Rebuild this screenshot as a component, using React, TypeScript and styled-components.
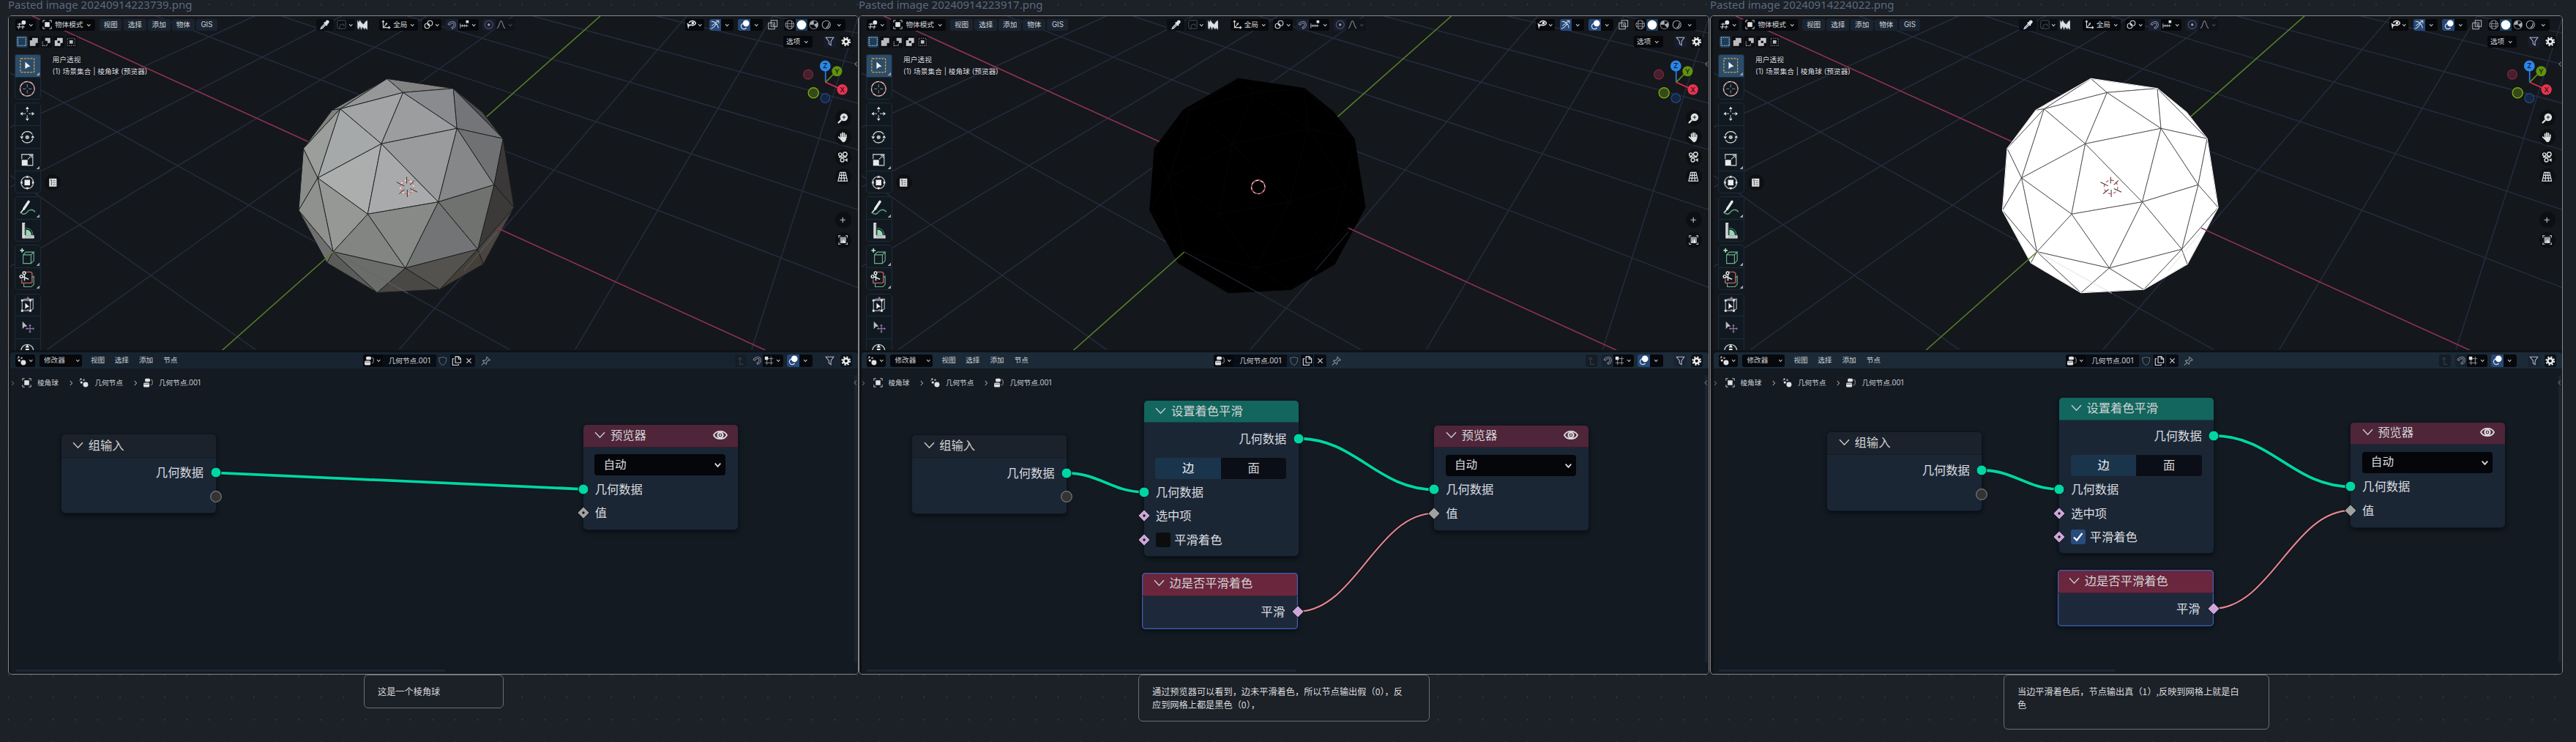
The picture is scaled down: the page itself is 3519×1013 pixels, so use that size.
import React from "react";
import styled, { createGlobalStyle, css } from "styled-components";

const uiFont = `Inter, "Noto Sans CJK SC", sans-serif`;

const GlobalStyle = createGlobalStyle`
  html, body { margin: 0; padding: 0; background: #1c2027; }
  * { box-sizing: border-box; }
  svg { display: block; flex: none; }
`;

/* ---------- page ---------- */

const Page = styled.main`
  width: 3519px;
  height: 1013px;
  overflow: hidden;
  display: flex;
  flex-direction: column;
  padding-left: 11px;
  background-color: #1c2027;
  background-image: radial-gradient(circle at center, #3c3f40 0.7px, rgba(60, 63, 64, 0) 1.3px);
  background-size: 30.53px 30.53px;
  background-position: -3.8px -9.1px;
  font-family: ${uiFont};
`;

const Row = styled.div`
  display: flex;
  align-items: flex-start;
`;

const Slot = styled.div<{ $w: number; $gap?: number }>`
  width: ${(p) => p.$w}px;
  margin-left: ${(p) => p.$gap ?? 0}px;
  flex: none;
`;

const FileLabel = styled.div`
  width: fit-content;
  height: 20px;
  padding-right: 8px;
  background: #1c2027;
  color: #5a6a7d;
  font: 400 15px/13px "Noto Sans", sans-serif;
  white-space: nowrap;
`;

const TitleBar = styled(Row)`
  height: 21px;
`;

const Panel = styled.section`
  height: 900px;
  border: 1px solid #868686;
  border-radius: 5px;
  overflow: hidden;
  background: #0e1216;
`;

const Shot = styled.div<{ $pad: number }>`
  margin-left: ${(p) => p.$pad}px;
  height: 898px;
  display: flex;
  flex-direction: column;
`;

const Note = styled.div<{ $x: number; $w: number; $h: number }>`
  margin-left: ${(p) => p.$x}px;
  width: ${(p) => p.$w}px;
  height: ${(p) => p.$h}px;
  padding: 13px 18px;
  border: 1.5px solid #6e6e6e;
  border-radius: 6px;
  background: #1c2027;
  color: #d9dbdd;
  font: 400 12.2px/18.3px "Noto Sans CJK SC", sans-serif;
  white-space: nowrap;
`;

/* ---------- viewport ---------- */

const Viewport = styled.div`
  position: relative;
  height: 456px;
  flex: none;
  overflow: hidden;
  background: #14171c;
  border-left: 2px solid #101317;
`;

const SceneSvg = styled.svg`
  position: absolute;
  inset: 0 0 0 -2px;
  width: calc(100% + 2px);
  height: 456px;
`;

const Overlay = styled.div`
  position: relative;
  height: 100%;
  margin-left: -2px;
  display: flex;
  flex-direction: column;
`;

const Bar = styled.div<{ $top: number; $right: number }>`
  display: flex;
  align-items: center;
  padding: ${(p) => p.$top}px ${(p) => p.$right}px 0 9px;
  flex: none;
`;

const Ctl = styled.div<{ $w: number; $gap?: number; $bg?: string; $push?: boolean; $h?: number; $dim?: boolean; $r?: string; $left?: boolean }>`
  width: ${(p) => p.$w}px;
  height: ${(p) => p.$h ?? 15.6}px;
  margin-left: ${(p) => (p.$push ? "auto" : `${p.$gap ?? 0}px`)};
  background: ${(p) => p.$bg ?? "#06080c"};
  border-radius: ${(p) => p.$r ?? "3px"};
  display: flex;
  align-items: center;
  justify-content: ${(p) => (p.$left ? "flex-start" : "space-evenly")};
  color: ${(p) => (p.$dim ? "#4b5059" : "#d0d3d6")};
  font-size: 9.65px;
  line-height: 1;
  white-space: nowrap;
  flex: none;
`;

const MenuText = styled.span<{ $gap?: number; $c?: string }>`
  margin-left: ${(p) => p.$gap ?? 0}px;
  color: ${(p) => p.$c ?? "#c8ccd1"};
  font-size: 9.65px;
  line-height: 14px;
  white-space: nowrap;
  flex: none;
`;

const Body = styled.div`
  display: flex;
  flex: 1;
  margin-top: 9.5px;
  padding-left: 8.3px;
  min-height: 0;
`;

const Toolbar = styled.div`
  width: 36px;
  display: flex;
  flex-direction: column;
  gap: 4.4px;
  flex: none;
`;

const ToolGroup = styled.div`
  position: relative;
  border-radius: 4px;
  overflow: hidden;
  background: #111920;
  flex: none;
  &::after {
    content: "";
    position: absolute;
    inset: 0;
    border: 1px solid #1b2b3a;
    border-radius: 4px;
  }
`;

const Tool = styled.div<{ $active?: boolean }>`
  position: relative;
  height: 30.9px;
  display: flex;
  align-items: center;
  justify-content: center;
  padding-right: 1.5px;
  background: ${(p) => (p.$active ? "#2b4d6b" : "transparent")};
  & + & {
    border-top: 1px solid #1b2b3a;
  }
`;

const Corner = styled.i`
  position: absolute;
  right: 2px;
  bottom: 2px;
  width: 4px;
  height: 4px;
  background: linear-gradient(135deg, transparent 50%, #9aa0a6 50%);
`;

const Info = styled.div`
  margin: -0.5px 0 0 15.3px;
  color: #dcdee0;
  font-size: 9.65px;
  letter-spacing: 0.08px;
  line-height: 16px;
  white-space: nowrap;
  text-shadow: 0 1px 1px #000;
`;

const Round = styled.div<{ $gap?: number }>`
  width: 22px;
  height: 22px;
  margin-top: ${(p) => p.$gap ?? 0}px;
  border-radius: 50%;
  background: #0d0f12;
  display: flex;
  align-items: center;
  justify-content: center;
`;

const Float = styled.div`
  margin: 132.5px 0 0 -10.5px;
`;

const NavColumn = styled.div`
  margin-left: auto;
  width: 80px;
  display: flex;
  flex-direction: column;
  align-items: flex-end;
  padding-right: 9.5px;
`;

const GizmoWrap = styled.div`
  margin: 2.5px -9.5px 0 0;
`;

/* ---------- node editor ---------- */

const NodeHeader = styled.div<{ $bg: string }>`
  margin-top: 3px;
  margin-left: 2px;
  height: 22.3px;
  flex: none;
  display: flex;
  align-items: center;
  padding: 0.5px 8px 0 7px;
  border-radius: 4px 4px 0 0;
  background: ${(p) => p.$bg};
`;

const Canvas = styled.div`
  position: relative;
  flex: 1;
  margin-left: 2px;
  background: #131a21;
  overflow: hidden;
`;

const CanvasSpace = styled.div`
  position: absolute;
  inset: 0 0 0 -2px;
`;

const Crumbs = styled.div`
  display: flex;
  align-items: center;
  height: 16px;
  margin-top: 11.7px;
  color: #cdd1d4;
`;

const LinkSvg = styled.svg`
  position: absolute;
  left: 0;
  top: 0;
  overflow: visible;
`;

const NodeBox = styled.div<{ $x: number; $y: number; $h: number; $w?: number; $sel?: boolean }>`
  position: absolute;
  left: ${(p) => p.$x - 12}px;
  top: ${(p) => p.$y - 503}px;
  width: ${(p) => p.$w ?? 211}px;
  height: ${(p) => p.$h}px;
  border-radius: 5px;
  background: ${(p) => (p.$sel ? "#1d293b" : "#1b2635")};
  box-shadow: ${(p) => (p.$sel ? "inset 0 0 0 1.2px #4060b4, 0 2px 6px rgba(4,7,14,.7)" : "0 0 0 1px #0d1420, 0 3px 6px rgba(4,7,14,.8)")};
`;

const NodeTitle = styled.div<{ $bg: string; $h: number; $sel?: boolean }>`
  display: flex;
  align-items: center;
  height: ${(p) => p.$h}px;
  padding: 0 14px 2px 15.5px;
  border-radius: 5px 5px 0 0;
  background: ${(p) => p.$bg};
  color: #d2d4d7;
  font-size: 16.3px;
  line-height: 28px;
  gap: 6.7px;
  border-bottom: 1px solid rgba(8, 12, 20, 0.35);
  ${(p) => p.$sel && css`box-shadow: inset 0 1.2px 0 #4060b4, inset 1.2px 0 0 #4060b4, inset -1.2px 0 0 #4060b4;`}
  & > svg:nth-of-type(2) {
    margin-left: auto;
  }
`;

const Port = styled.div<{ $out?: boolean; $mt?: number; $pad?: number }>`
  position: relative;
  display: flex;
  align-items: center;
  justify-content: ${(p) => (p.$out ? "flex-end" : "flex-start")};
  height: 32.6px;
  margin-top: ${(p) => p.$mt ?? 0}px;
  padding: 0 ${(p) => p.$pad ?? 16.5}px 0 16px;
  color: #dcdee0;
  font-size: 16.3px;
  line-height: 28px;
`;

const PortMark = styled.svg<{ $out?: boolean }>`
  position: absolute;
  top: 7.3px;
  ${(p) => (p.$out ? "right: -9px;" : "left: -9px;")}
`;

const Dropdown = styled.div`
  display: flex;
  align-items: center;
  justify-content: space-between;
  width: 178.4px;
  height: 29px;
  margin: 9.5px 0 2.4px 15.7px;
  padding: 0 3px 0 12px;
  border-radius: 4px;
  background: #04060a;
  color: #dcdee0;
  font-size: 15.6px;
  line-height: 26px;
`;

const Toggle = styled.div`
  display: flex;
  width: 179px;
  height: 29px;
  margin: 9.4px 0 2px 15.7px;
  border-radius: 4px;
  overflow: hidden;
  box-shadow: 0 0 0 0.5px #23262c;
`;

const ToggleItem = styled.div<{ $on?: boolean }>`
  flex: 1;
  text-align: center;
  line-height: 28px;
  font-size: 16.3px;
  color: ${(p) => (p.$on ? "#f2f4f6" : "#d6d8da")};
  background: ${(p) => (p.$on ? "#1a344c" : "#0b0e17")};
`;

const Check = styled.div<{ $on?: boolean }>`
  width: 20px;
  height: 20px;
  margin-right: 5.5px;
  border-radius: 3px;
  background: ${(p) => (p.$on ? "#284c7c" : "#0d0d0d")};
`;

const ScrollX = styled.div<{ $w: number }>`
  position: absolute;
  left: 9px;
  bottom: 3px;
  width: ${(p) => p.$w}px;
  height: 3px;
  border-radius: 2px;
  background: #1d2633;
`;

const ScrollY = styled.div`
  position: absolute;
  right: 1.5px;
  top: 9px;
  width: 3.5px;
  height: 393px;
  border-radius: 2px;
  background: #1b2430;
`;

const Collapse = styled.div`
  position: absolute;
  right: -1px;
  top: 15px;
  color: #9ba0a5;
`;

/* ---------- icons ---------- */

const W = "#dfe1e3";
const glyphs: Record<string, React.ReactNode> = {
  down: <path d="M4 6l4 4.5L12 6" stroke="currentColor" strokeWidth="1.9" />,
  right: <path d="M6 3l4.5 5L6 13" stroke="currentColor" strokeWidth="1.6" />,
  left: <path d="M10 3L5.5 8 10 13" stroke="currentColor" strokeWidth="1.6" />,
  view3d: (
    <g stroke="currentColor" strokeWidth="1.3">
      <path d="M1 7.5h8M0 12h13M5 5L3 15.5M10.5 9.5L9.5 15.5" />
      <circle cx="11.5" cy="4.5" r="3.6" fill={W} stroke="none" />
    </g>
  ),
  object: (
    <g stroke="currentColor" strokeWidth="1.2">
      <path d="M1 4.5V1h3.5M11.5 1H15v3.5M15 11.5V15h-3.5M4.5 15H1v-3.5" />
      <rect x="4" y="4" width="8" height="8" fill={W} stroke="none" />
    </g>
  ),
  dropper: (
    <g>
      <path d="M10 1.5c1.5-1.5 3.5-1 4.300 0 1 1 1.200 2.800-.3 4.200L12 7.500 12.500 8.500 11 10 6 5l1.500-1.500 1 .5z" fill={W} />
      <path d="M8 6.500L2.500 12 1.500 14.500 4 13.500 9.500 8" stroke={W} strokeWidth="1.5" />
    </g>
  ),
  transformBox: (
    <g stroke="#4a5058" strokeWidth="1.2">
      <rect x="1" y="1" width="14" height="14" rx="1.5" />
      <path d="M5 15v-3.5a4 4 0 014-4h3V11" />
    </g>
  ),
  burst: <path d="M0 1l2.500 3L4 .5l3 4.500 3 2 3-4.500L16 1v14.500l-3.500-3-1 2.500-3.500-4-1.500 4.500L4 10l-1.500 4.500L.5 13z" fill={W} stroke="#8d9196" strokeWidth=".6" />,
  axes: (
    <g stroke="currentColor" strokeWidth="1.4">
      <path d="M3 2v11h11M1 4l2-2.500L5 4M12 11l2.500 2-2.500 2M3 13L9 7" />
      <path d="M9 4.500V7H6.500" />
    </g>
  ),
  link: (
    <g stroke="currentColor" strokeWidth="1.4">
      <circle cx="10.300" cy="5.700" r="4.200" />
      <circle cx="5.500" cy="10.300" r="4.200" />
      <circle cx="8" cy="8" r="1.300" fill={W} stroke="none" />
    </g>
  ),
  magnet: (
    <g stroke="#83888f" strokeWidth="1.3">
      <path d="M1.500 6.500C4 1 12 0 14 5s-2 8-5 9.500L7.500 12c3-1.500 5-3.500 4-6S6 4.500 4 8z" />
    </g>
  ),
  ruler: (
    <g stroke="#a9adb2" strokeWidth="1.3">
      <path d="M1 6v8M4.500 8v4M8 8v4M11.500 8v4M1 10h13" />
      <rect x="10.500" y="1" width="4.500" height="4.500" fill={W} stroke="none" />
    </g>
  ),
  proportional: (
    <g>
      <circle cx="8" cy="8" r="6.500" stroke="#555b66" strokeWidth="1.2" />
      <circle cx="8" cy="8" r="2" fill="#9aa0a8" />
    </g>
  ),
  bell: <path d="M1 14c4 0 4-12 7-12s3 12 7 12" stroke="#7b8087" strokeWidth="1.4" />,
  eyeCursor: (
    <g>
      <path d="M4 5c2.500-4.500 9-4 11 .5-2 4-6.500 4.500-9 2" stroke={W} strokeWidth="1.800" />
      <circle cx="10" cy="5.200" r="2.200" fill={W} />
      <path d="M.5 5l7 4.500-3.500 1L2.500 15z" fill={W} />
    </g>
  ),
  gizmo: (
    <g stroke="#c9d3de" strokeWidth="1.4">
      <path d="M1 15c4-1 8-5 9-8M14 2L3 10M10 1.500h4.500V6M2 3c6-1 11 4 12 11" />
    </g>
  ),
  overlay: (
    <g>
      <path d="M7 5.500a4.500 4.500 0 104 7" stroke={W} strokeWidth="1.3" />
      <circle cx="10.500" cy="5.500" r="5" fill="#fff" />
      <path d="M6 8c0 2 2 3 3.500 3" stroke="#244a78" strokeWidth="1" />
    </g>
  ),
  xray: (
    <g stroke="#b5b9be" strokeWidth="1.2">
      <rect x="1" y="5" width="10" height="10" />
      <rect x="5" y="1" width="10" height="10" />
      <path d="M7 8h2v2" />
    </g>
  ),
  wire: (
    <g stroke="#9a9fa5" strokeWidth="1.1">
      <circle cx="8" cy="8" r="7" />
      <path d="M1 6.500h14M1.500 10.500h13M5.500 1.500c-1.500 4-1.500 9 0 13M10.500 1.500c1.500 4 1.500 9 0 13" />
    </g>
  ),
  solid: <circle cx="8" cy="8" r="7.3" fill="#fff" />,
  material: (
    <g>
      <circle cx="8" cy="8" r="6.800" stroke="#85898e" strokeWidth="1.2" />
      <path d="M8 1.500A6.500 6.500 0 001.500 8H8zM8 8l4.500 5A6.500 6.500 0 0014.500 8V4z" fill="#a9adb1" />
    </g>
  ),
  rendered: (
    <g>
      <circle cx="8" cy="8" r="6.600" stroke="#a7abaf" strokeWidth="1.3" />
      <path d="M11.500 5.500a5 5 0 01-4 7" stroke="#a7abaf" strokeWidth="1.6" />
    </g>
  ),
  filter: <path d="M1.500 1.500h13L10 8v6.500L6.500 12V8z" stroke="#b3b7c4" strokeWidth="1.3" />,
  gear: (
    <g>
      <circle cx="8" cy="8" r="3.900" stroke="#eceeef" strokeWidth="3" />
      <circle cx="8" cy="8" r="6.400" stroke="#eceeef" strokeWidth="2.4" strokeDasharray="2.5 2.527" />
    </g>
  ),
  nodes: (
    <g fill={W}>
      <circle cx="3" cy="2" r="1.400" />
      <circle cx="8" cy="3.500" r="1.600" opacity=".7" />
      <circle cx="4" cy="7.500" r="2" />
      <circle cx="11" cy="11" r="4.300" />
      <circle cx="1" cy="4.500" r=".8" opacity=".6" />
    </g>
  ),
  tree: (
    <g>
      <rect x="2.500" y="1" width="8.500" height="5.500" rx="2" fill={W} />
      <rect x="0" y="8" width="10" height="7.500" rx="2" fill={W} />
      <path d="M.5 10.300h9" stroke="#555" strokeWidth="1" />
      <path d="M12 3c3 0 3 1 3 3v3c0 2-1 3-3 3" stroke="#a5a9ad" strokeWidth="1.1" />
    </g>
  ),
  shield: <path d="M8 1.500c2 1.200 4 1.500 6 1.500 0 6-1.500 10-6 12C3.500 13 2 9 2 3c2 0 4-.3 6-1.500z" stroke="#6e747c" strokeWidth="1.1" />,
  copy: (
    <g stroke={W} strokeWidth="1.3">
      <path d="M6 1h5.500L15 4.500V11H6zM11 1v4h4" />
      <path d="M4 4.500H1.500V15H11v-2" />
    </g>
  ),
  close: <path d="M3.500 3.500l9 9M12.500 3.500l-9 9" stroke={W} strokeWidth="1.5" />,
  pin: <path d="M9.500 1.500l5 5-1.500.8-1.500-.3-2.500 3 .3 2.500-1 1L3 8l1-1 2.500.3 2.800-2.500L9 3zM5.500 10.500L1 15" stroke="#8a939c" strokeWidth="1.2" />,
  up: <path d="M4 6l3-3.500L10 6M7 3v11h6" stroke="#353c43" strokeWidth="1.4" />,
  gridSnap: (
    <g stroke="#8e9398" strokeWidth="1.2">
      <path d="M1 11.500h14M4.500 6v9M11.500 1v14M6 4.500h9" />
      <rect x="1" y="1" width="5.500" height="5.500" fill={W} stroke="none" />
    </g>
  ),
  selNew: <rect x="1.500" y="1.500" width="13" height="13" stroke="#cfdbe6" strokeWidth="1.4" strokeDasharray="1.6 1.4" />,
  selAdd: <path d="M5 1h10v9h-4v5H1V5h4z" fill="#b9bbbd" />,
  selSub: (
    <g>
      <path d="M6 1h9v9h-5V6H6z" fill="#b9bbbd" />
      <path d="M1.500 14.500v-8M1.500 14.500h8v-4" stroke="#b9bbbd" strokeWidth="1.4" strokeDasharray="1.6 1.4" />
    </g>
  ),
  selDiff: <path fillRule="evenodd" d="M5 1h10v9h-4v5H1V5h4zM6 6v4h4V6z" fill="#c6c8ca" />,
  selInt: (
    <g>
      <rect x="1.500" y="1.500" width="13" height="13" stroke="#8e9194" strokeWidth="1.4" strokeDasharray="1.6 1.9" />
      <rect x="5" y="5" width="6" height="6" fill="#b9bbbd" />
    </g>
  ),
  zoom: (
    <g>
      <circle cx="9.500" cy="6.500" r="5.600" fill={W} />
      <path d="M5.500 10.500L1 15" stroke={W} strokeWidth="2.4" />
      <path d="M9.500 4v5M7 6.500h5" stroke="#222" strokeWidth="1.1" />
    </g>
  ),
  hand: (
    <g stroke={W} strokeWidth="1.9" strokeLinecap="round">
      <path d="M5 7.500V3M7.500 7V1.500M10 7.500V2M12.500 8.500V4.500M4.500 10L1.800 7.500" />
      <path d="M5 8h7.500c0 3-.5 5-2.500 6.500H7.500L4 10z" fill={W} strokeWidth="1" />
    </g>
  ),
  camera: (
    <g stroke={W} strokeWidth="1.5">
      <circle cx="4" cy="4.300" r="2.300" />
      <circle cx="11" cy="3.800" r="3" />
      <path d="M2 8h11" />
      <circle cx="7" cy="12.300" r="2.600" />
      <path d="M10.500 12l4-2.500v5.500z" fill={W} stroke="none" />
    </g>
  ),
  persp: (
    <g stroke={W} strokeWidth="1.3">
      <path d="M4 1.500h8l3 13H1zM3 6h10M2 10h12M6.700 1.500l-1.200 13M9.300 1.500l1.200 13" />
    </g>
  ),
  plus: <path d="M8 4v8M4 8h8" stroke="#c5c7c9" strokeWidth="1.2" />,
  frame: (
    <g>
      <path d="M1 4V1h3M12 1h3v3M15 12v3h-3M4 15H1v-3" stroke={W} strokeWidth="1.2" />
      <rect x="3" y="3" width="10" height="10" fill="#9a9da0" />
      <path d="M4.500 12.500L8 5l3.500 7.500z" fill="#fff" />
      <path d="M8 5l-1 7" stroke="#333" strokeWidth=".7" />
    </g>
  ),
  book: (
    <g>
      <rect x="1.500" y="1" width="13" height="14" fill={W} />
      <path d="M3.500 3.500h2M5.500 3v10" stroke="#222" strokeWidth="1" />
      <path d="M8 4l1.500 1.500L11 4l1.500 1.500M8 7.500L9.500 9 11 7.500 12.500 9M8 11l1.500 1.500L11 11l1.500 1.500" stroke="#333" strokeWidth="1" />
    </g>
  ),
  eye: (
    <g>
      <path d="M.8 8C3.500 2.500 12.500 2.500 15.200 8 12.500 13.500 3.500 13.500.8 8z" stroke="#dadcde" strokeWidth="1.5" />
      <circle cx="8" cy="8" r="2.800" stroke="#dadcde" strokeWidth="1.8" />
      <circle cx="8" cy="8" r="1" fill="#dadcde" />
    </g>
  ),
};

function Icon({ n, s = 12.5 }: { n: string; s?: number }) {
  return (
    <svg width={s} height={s} viewBox="0 0 16 16" fill="none">
      {glyphs[n]}
    </svg>
  );
}

const Chev = () => <Icon n="down" s={8.5} />;

const toolGlyphs: Record<string, React.ReactNode> = {
  select: (
    <g>
      <rect x="2" y="2" width="20" height="20" rx="1" stroke="#e0a33b" strokeWidth="1.3" strokeDasharray="3 1.5" />
      <path d="M9 7l7.500 6.500-4 .8-3.500 3z" fill="#f4f5f6" />
    </g>
  ),
  cursor: (
    <g>
      <circle cx="12" cy="12" r="10.500" stroke="#e6e6e6" strokeWidth="1.3" />
      <circle cx="12" cy="12" r="10.500" stroke="#c65a5a" strokeWidth="1.3" strokeDasharray="4.2 4.05" />
      <path d="M12 5.500v4.500M12 14v4.500M5.500 12H10M14 12h4.500" stroke="#8e9499" />
    </g>
  ),
  move: (
    <g fill={W} stroke={W}>
      <path d="M12 6v3.500M12 14.500V18M6 12h3.500M14.500 12H18" strokeWidth="1.4" strokeDasharray="1.4 1" />
      <path d="M12 1.500l2.600 3.700H9.400zM12 22.500l2.600-3.700H9.400zM1.500 12l3.700-2.600v5.200zM22.500 12l-3.700-2.600v5.200z" stroke="none" />
    </g>
  ),
  rotate: (
    <g>
      <path d="M4 10a8.500 8.500 0 0115.500-2M20 14a8.500 8.500 0 01-15.500 2" stroke={W} strokeWidth="1.3" />
      <circle cx="12" cy="12" r="2.800" fill="#b7babd" />
      <path d="M1.500 11h5L4 15zM17.500 13h5L20 9z" fill={W} />
    </g>
  ),
  scale: (
    <g>
      <path d="M4 11V4h16v16h-8" stroke="#b7babd" strokeWidth="1.4" />
      <rect x="4" y="12" width="8.500" height="8.500" fill="#e8e9ea" />
      <path d="M13 11l5-5M15 5.500h3.500V9" stroke={W} strokeWidth="1.3" strokeDasharray="2 .8" />
    </g>
  ),
  transform: (
    <g>
      <circle cx="12" cy="12" r="9" stroke="#b7babd" strokeWidth="1.3" />
      <rect x="8" y="8" width="8" height="8" fill="#eceded" />
      <path d="M12 1.500l2.500 3.500h-5zM12 22.500l2.500-3.500h-5zM1.500 12L5 9.500v5zM22.500 12L19 9.500v5z" fill={W} />
    </g>
  ),
  annotate: (
    <g strokeLinecap="round">
      <path d="M14 3.500L7 14" stroke="#e8e9ea" strokeWidth="3.600" />
      <path d="M6 15.500L2.500 19.500" stroke="#e8e9ea" strokeWidth="1.8" />
      <path d="M3 19.500c3 3.500 7 2 9-1s7-5 11-.5" stroke="#5f9c80" strokeWidth="1.700" />
    </g>
  ),
  measure: (
    <g>
      <path d="M4.500 0h4.200v18.500H22v4.500H4.500z" fill="#d9dadb" />
      <path d="M7.800 2v16M9 20.700h12" stroke="#444" strokeWidth="1" strokeDasharray="1 1.4" />
      <path d="M10 10c5 0 8 3.500 8 8h-8z" fill="#8fd9b2" />
      <path d="M10 8c6 0 10 4 10 10" stroke="#5f9c80" />
    </g>
  ),
  cube: (
    <g stroke="#6fae8d" strokeWidth="1.2">
      <path d="M6 9.500h11.500V22H6zM6 9.500L10 5.500h11.500L17.500 9.500M21.500 5.500V18L17.500 22" />
      <path d="M4.500 0v6M1.500 3h6" stroke="#9be3bd" strokeWidth="1.8" />
    </g>
  ),
  cut: (
    <g strokeWidth="1.2">
      <path d="M7 17v6h11l3.500-3.500V7.500L18 10" stroke="#6fae8d" />
      <path d="M4 12v5.500h13.500l1.500-1V3l-2-1.500H9" stroke="#c0605a" strokeWidth="1.5" />
      <g stroke="#eceded" strokeWidth="1.5">
        <circle cx="7.500" cy="3" r="2" />
        <circle cx="3.300" cy="8" r="2" />
        <path d="M8 5.500V14M5.500 8.500l8.500 3.500" />
      </g>
    </g>
  ),
  box: (
    <g>
      <path d="M4.500 5.500h12v15h-12zM16.500 5.500l4-2v14l-4 3M4.500 5.500L8 3.500h12.500" stroke="#a9acb0" strokeWidth="1.3" />
      <path d="M3 4h3v3H3zM15 4h3v3h-3zM3 19h3v3H3zM15 19h3v3h-3z" fill="#e3e4e5" />
      <path d="M9 9l6 6-3.500.5L9 18z" fill="#f4f5f6" />
      <circle cx="13" cy="2" r="1.700" fill="#9a6fb5" />
      <circle cx="13" cy="19.500" r="1.400" fill="#9a6fb5" />
    </g>
  ),
  cage: (
    <g>
      <path d="M5 3l7 7-4 .6L5 14z" fill="#b9bcbf" />
      <path d="M16 8v11M10.500 13.500h11" stroke="#8a70a0" strokeWidth="1.4" />
      <path d="M16 7l2 2.500h-4zM16 20l2-2.500h-4zM9.500 13.500l2.500-2v4zM22.500 13.500l-2.500-2v4z" fill="#8a70a0" />
    </g>
  ),
  globe: (
    <g>
      <path d="M3 12.500a9 9 0 0118 0" stroke="#d0d3d5" strokeWidth="1.3" />
      <path d="M12 3.500l3 4.500H9zM9.500 9.500h5v4h-5z" fill="#eceded" />
    </g>
  ),
};

const toolGroups = [
  ["select", "cursor"],
  ["move", "rotate", "scale", "transform"],
  ["annotate", "measure"],
  ["cube", "cut"],
  ["box", "cage", "globe"],
];
const hasMore = new Set(["select", "scale", "annotate", "cube", "cut"]);

/* ---------- 3D scene ---------- */

type Mode = "shaded" | "black" | "white";

const pt: Record<string, [number, number]> = {
  A: [528.7, 107.3], B: [550.7, 126.3], C: [619.3, 120.7], D: [464.7, 148.7], d: [453.5, 150.3],
  E: [624.3, 175.3], F: [521, 196.3], G: [687.3, 189.3], H: [675, 252.3], I: [702.3, 283.3],
  J: [598.7, 275.7], K: [502.3, 292.3], L: [434, 243], M: [414.4, 202.7], N: [407.9, 287.3],
  O: [455, 343.7], P: [553.7, 366], Q: [652.7, 340.3], R: [660.3, 360.7], S: [600.7, 395.3],
  T: [515.3, 399.7], U: [446.7, 359], V: [659.3, 153.3],
};

const faces: [string, string][] = [
  ["ABD", "#969798"], ["ADd", "#7d7e7e"], ["ACB", "#838384"], ["BDF", "#a3a4a6"], ["BFE", "#9c9d9f"],
  ["BCE", "#8a8b8f"], ["CEG", "#747579"], ["CGV", "#4c4c4e"], ["DFL", "#a6a9aa"], ["DLM", "#9c9e9c"],
  ["DMd", "#808280"], ["FLK", "#acadad"], ["FKJ", "#a9aaab"], ["FEJ", "#9a9b9c"], ["EJH", "#868788"],
  ["EGH", "#707173"], ["GHI", "#3b383a"], ["HIQ", "#3c3939"], ["HJQ", "#70726f"], ["JQP", "#737476"],
  ["JKP", "#888a88"], ["KOP", "#838583"], ["KLO", "#969896"], ["LMN", "#8b8d8b"], ["LNO", "#8f918f"],
  ["NOU", "#6e6f6e"], ["OUT", "#5b5c5a"], ["OTP", "#6b6d6b"], ["PTS", "#4a4844"], ["PSQ", "#53524e"],
  ["QSR", "#453f3a"], ["QIR", "#4a4541"],
];

const outline = "ACVGIRSTUNMd";

const gridLines = [
  [12, 98.6, 696.4, 477.3], [12, 238.3, 349, 477.3], [213, 22, 1172, 392.7], [385, 22, 1172, 286.4],
  [556.7, 22, 1172, 204.6], [728, 22, 1172, 141], [897, 22, 1172, 87.7], [1055, 22, 1172, 45.2],
  [12, 174.6, 348, 22], [12, 256.3, 467, 22], [12, 365, 582.7, 22], [64.3, 477.3, 700.7, 22],
  [545.3, 477.3, 938, 22], [785.6, 477.3, 1055.6, 22], [1026.7, 477.3, 1172, 24],
];

const poly = (s: string) => s.split("").map((k) => pt[k].join(",")).join(" ");

const styles: Record<Mode, { edge: string; ew: number }> = {
  shaded: { edge: "#1b1c1d", ew: 0.9 },
  black: { edge: "#080909", ew: 0.7 },
  white: { edge: "#3c3c3c", ew: 0.8 },
};

function Scene({ mode }: { mode: Mode }) {
  const st = styles[mode];
  return (
    <SceneSvg viewBox="12 22 1160 456" preserveAspectRatio="none" fill="none">
      <g stroke="#252c3d" strokeWidth="1.5">
        {gridLines.map((l, i) => (
          <line key={i} x1={l[0]} y1={l[1]} x2={l[2]} y2={l[3]} />
        ))}
      </g>
      <line x1="44.4" y1="22" x2="440" y2="202" stroke="#8c3350" strokeWidth="1.6" />
      <line x1="820" y1="22" x2="650" y2="172.4" stroke="#557f2a" strokeWidth="1.6" />
      <polygon points={poly(outline)} fill={mode === "black" ? "#000" : mode === "white" ? "#fff" : "#444"} />
      <g stroke={st.edge} strokeWidth={st.ew} strokeLinejoin="round">
        {faces.map(([f, c]) => (
          <polygon key={f} points={poly(f)} fill={mode === "shaded" ? c : mode === "black" ? "#000" : "#fff"} />
        ))}
      </g>
      <polygon
        points={poly(outline)}
        stroke={mode === "shaded" ? "#1b1c1d" : mode === "black" ? "#000" : "#fff"}
        strokeWidth="1"
      />
      <g stroke={mode === "white" ? "#e0e0e3" : mode === "black" ? "#262c3c" : "#64646e"} strokeWidth="1.1" opacity={mode === "black" ? 1 : 0.8}>
        <path d="M455 343.7L557 400.2M679.2 316.5L634 369.5" />
      </g>
      <line x1="679.2" y1="311.3" x2="1045.5" y2="478" stroke="#8c3350" strokeWidth="1.6" />
      <line x1="455" y1="344" x2="303.7" y2="478" stroke="#557f2a" strokeWidth="1.6" />
      <circle cx="556" cy="255.3" r="9.3" stroke="#f4eeee" strokeWidth="1.3" />
      <circle cx="556" cy="255.3" r="9.3" stroke={mode === "black" ? "#b8202c" : "#e2504e"} strokeWidth="1.3" strokeDasharray="3.65 3.65" />
      {mode !== "black" && (
        <path
          d="M555.6 241.5v9M556.4 259v10M541.8 248.7l10.5 5.2M560 257.5l10.2 4.7M545.3 264.7l7.4-6.2M560 252.3l6.2-6"
          stroke="#33363a"
          strokeWidth="1"
        />
      )}
    </SceneSvg>
  );
}

function Gizmo() {
  return (
    <svg width="80" height="74" viewBox="1092 77 80 74" fill="none">
      <g strokeWidth="1.7">
        <path d="M1127.7 112.3V96" stroke="#2a7fe0" />
        <path d="M1127.7 112.3L1139 101" stroke="#5f8f14" />
        <path d="M1127.7 112.3L1145 120" stroke="#de304b" />
      </g>
      <circle cx="1104" cy="101.7" r="6.5" fill="#46202c" stroke="#81263a" strokeWidth="1.2" />
      <circle cx="1111.2" cy="126.7" r="7" fill="#36491a" stroke="#76a80f" strokeWidth="1.4" />
      <circle cx="1127.3" cy="134" r="6.3" fill="#152641" stroke="#1f4b86" strokeWidth="1.2" />
      <circle cx="1127.3" cy="90" r="7.4" fill="#2c86ea" />
      <circle cx="1143.4" cy="97.3" r="7" fill="#62930f" />
      <circle cx="1150.6" cy="122.3" r="7.2" fill="#e8334f" />
      <g fontFamily="Inter, sans-serif" fontSize="9.5" fontWeight="500" textAnchor="middle" fill="#10151c">
        <text x="1127.3" y="93.4">Z</text>
        <text x="1143.4" y="100.7">Y</text>
        <text x="1150.6" y="125.7">X</text>
      </g>
      <path d="M1170.5 84.5l-2.5 3 2.500 3" stroke="#a0a4a8" strokeWidth="1" />
    </svg>
  );
}

const menuBg = "#1a2430";
const blue = "#25487a";

function ViewportArea({ mode }: { mode: Mode }) {
  return (
    <Viewport>
      <Scene mode={mode} />
      <Overlay>
        <Bar $top={4} $right={17}>
          <Ctl $w={27.6}><Icon n="view3d" s={13} /><Chev /></Ctl>
          <Ctl $w={76} $gap={5.4}><Icon n="object" s={13} />物体模式<Chev /></Ctl>
          <Ctl $w={30.7} $gap={5.8} $bg={menuBg}>视图</Ctl>
          <Ctl $w={30.7} $gap={2.5} $bg={menuBg}>选择</Ctl>
          <Ctl $w={31} $gap={2} $bg={menuBg}>添加</Ctl>
          <Ctl $w={30.6} $gap={2.3} $bg={menuBg}>物体</Ctl>
          <Ctl $w={29.1} $gap={2.3} $bg={menuBg}>GIS</Ctl>
          <Ctl $w={24.3} $gap={134.7} $bg="#0a0e16"><Icon n="dropper" s={13.5} /></Ctl>
          <Ctl $w={26} $gap={3} $bg="#0a0d12"><Icon n="transformBox" s={13} /><Chev /></Ctl>
          <Ctl $w={17} $gap={1.5} $bg="#131a25"><Icon n="burst" s={14} /></Ctl>
          <Ctl $w={52.7} $gap={14.8}><Icon n="axes" s={13} />全局<Chev /></Ctl>
          <Ctl $w={26.3} $gap={6}><Icon n="link" s={13} /><Chev /></Ctl>
          <Ctl $w={16.7} $gap={5.7} $bg="#192033" $r="3px 0 0 3px"><Icon n="magnet" s={12.5} /></Ctl>
          <Ctl $w={28.3} $r="0 3px 3px 0"><Icon n="ruler" s={13} /><Chev /></Ctl>
          <Ctl $w={17.4} $gap={5.3} $bg="#181e30" $r="3px 0 0 3px"><Icon n="proportional" s={13.5} /></Ctl>
          <Ctl $w={27.3} $bg="#10131a" $dim $r="0 3px 3px 0"><Icon n="bell" s={13} /><Chev /></Ctl>
          <Ctl $w={26.4} $push><Icon n="eyeCursor" s={13.5} /><Chev /></Ctl>
          <Ctl $w={16.1} $gap={6.1} $bg={blue} $r="3px 0 0 3px"><Icon n="gizmo" s={13} /></Ctl>
          <Ctl $w={17.2} $r="0 3px 3px 0"><Chev /></Ctl>
          <Ctl $w={16.5} $gap={6.5} $bg={blue} $r="3px 0 0 3px"><Icon n="overlay" s={14} /></Ctl>
          <Ctl $w={17.2} $r="0 3px 3px 0"><Chev /></Ctl>
          <Ctl $w={15.3} $gap={6.5} $bg="#14181f"><Icon n="xray" s={13.5} /></Ctl>
          <Ctl $w={16} $gap={6.9} $r="3px 0 0 3px"><Icon n="wire" s={13.5} /></Ctl>
          <Ctl $w={16.5} $bg="#1a3c5a" $r="0"><Icon n="solid" s={14} /></Ctl>
          <Ctl $w={17.3} $r="0"><Icon n="material" s={13.5} /></Ctl>
          <Ctl $w={16.5} $r="0"><Icon n="rendered" s={13.5} /></Ctl>
          <Ctl $w={18} $r="0 3px 3px 0"><Chev /></Ctl>
        </Bar>
        <Bar $top={7.4} $right={8}>
          <Ctl $w={15.5} $gap={1} $bg="#1c3c58"><Icon n="selNew" s={13.5} /></Ctl>
          <Ctl $w={15} $gap={1.6} $bg="#0b0d11"><Icon n="selAdd" /></Ctl>
          <Ctl $w={15} $gap={1.9} $bg="#0b0d11"><Icon n="selSub" /></Ctl>
          <Ctl $w={15} $gap={1.9} $bg="#0b0d11"><Icon n="selDiff" /></Ctl>
          <Ctl $w={15} $gap={1.9} $bg="#0b0d11"><Icon n="selInt" /></Ctl>
          <Ctl $w={39.8} $push>选项<Chev /></Ctl>
          <Ctl $w={16.5} $gap={15.3} $bg="#161c2b"><Icon n="filter" s={13} /></Ctl>
          <Ctl $w={15.7} $gap={6.8} $bg="#0b0e13"><Icon n="gear" s={13.5} /></Ctl>
        </Bar>
        <Body>
          <Toolbar>
            {toolGroups.map((g) => (
              <ToolGroup key={g[0]}>
                {g.map((t) => (
                  <Tool key={t} $active={t === "select"}>
                    <svg width="22.5" height="22.5" viewBox="0 0 24 24" fill="none">{toolGlyphs[t]}</svg>
                    {hasMore.has(t) && <Corner />}
                  </Tool>
                ))}
              </ToolGroup>
            ))}
          </Toolbar>
          <Info>
            <div>用户透视</div>
            <div>(1) 场景集合 | 棱角球 (预览器)</div>
            <Float><Round><Icon n="book" s={12.5} /></Round></Float>
          </Info>
          <NavColumn>
            <GizmoWrap><Gizmo /></GizmoWrap>
            <Round $gap={-0.5}><Icon n="zoom" s={15} /></Round>
            <Round $gap={4}><Icon n="hand" s={15} /></Round>
            <Round $gap={5.5}><Icon n="camera" s={15} /></Round>
            <Round $gap={4.7}><Icon n="persp" s={14.5} /></Round>
            <Round $gap={37}><Icon n="plus" s={14.5} /></Round>
            <Round $gap={5.3}><Icon n="frame" s={13.5} /></Round>
          </NavColumn>
        </Body>
      </Overlay>
    </Viewport>
  );
}

/* ---------- nodes ---------- */

type Kind = "geo" | "empty" | "bool" | "boolIn" | "val" | "valIn";

function Socket({ kind, out }: { kind: Kind; out?: boolean }) {
  return (
    <PortMark $out={out} width="18" height="18" viewBox="0 0 18 18" fill="none">
      {kind === "geo" && <circle cx="9" cy="9" r="7" fill="#00d6a3" stroke="#0c1218" strokeWidth="1" />}
      {kind === "empty" && <circle cx="9" cy="9" r="7.3" fill="#333334" stroke="#77787a" strokeWidth="1.2" />}
      {kind !== "geo" && kind !== "empty" && (
        <path d="M9 .8L17.200 9 9 17.200.8 9z" fill={kind.startsWith("bool") ? "#cca6d6" : "#a1a1a1"} stroke="#0c1218" strokeWidth="1" />
      )}
      {kind.endsWith("In") && <circle cx="9" cy="9" r="1.7" fill="#101318" />}
    </PortMark>
  );
}

const TitleChevron = () => (
  <svg width="15" height="10" viewBox="0 0 15 10" fill="none">
    <path d="M1 1.200l6.500 7 6.500-7" stroke="#c6c9cc" strokeWidth="1.5" />
  </svg>
);

const curve = (x1: number, y1: number, x2: number, y2: number) => {
  const m = (x2 - x1) * 0.42;
  return `M${x1} ${y1}C${x1 + m} ${y1} ${x2 - m} ${y2} ${x2} ${y2}`;
};

function Links({ full, dx, dy, vx }: { full: boolean; dx: number; dy: number; vx: number }) {
  const geo = full
    ? [curve(293.9 + dx, 645.4 + dy, 400.4 + dx, 671.3 + dy), curve(610.8 + dx, 598.2 + dy, vx, 667.8 + dy)]
    : ["M293.9 645.4L796.7 667.8"];
  return (
    <LinkSvg width="1160" height="417" viewBox="12 503 1160 417" fill="none">
      {geo.map((d) => (
        <g key={d}>
          <path d={d} stroke="#0c1217" strokeWidth="6" />
          <path d={d} stroke="#00d6a3" strokeWidth="3.8" />
        </g>
      ))}
      {full && <path d={curve(609.4 + dx, 834.3 + dy, vx, 700.3 + dy)} stroke="#0c1217" strokeWidth="4" />}
      {full && <path d={curve(609.4 + dx, 834.3 + dy, vx, 700.3 + dy)} stroke="#e78590" strokeWidth="2.1" />}
    </LinkSvg>
  );
}

function NodeArea({ full, checked, dx, dy, scroll, bg }: { full: boolean; checked: boolean; dx: number; dy: number; scroll: number; bg: string }) {
  const vx = 796.7 + (dx ? dx + 1.5 : 0);
  return (
    <>
      <NodeHeader $bg={bg}>
        <Ctl $w={26.8} $h={17}><Icon n="nodes" s={13} /><Chev /></Ctl>
        <Ctl $w={58.4} $h={17} $gap={5.8} $left>
          <MenuText $gap={6.4}>修改器</MenuText>
          <MenuText $gap={13}><Chev /></MenuText>
        </Ctl>
        <MenuText $gap={12}>视图</MenuText>
        <MenuText $gap={13.5}>选择</MenuText>
        <MenuText $gap={14}>添加</MenuText>
        <MenuText $gap={14}>节点</MenuText>
        <Ctl $w={26.8} $h={17} $gap={253.5} $r="3px 0 0 3px"><Icon n="tree" s={13} /><Chev /></Ctl>
        <Ctl $w={73} $h={17} $bg="#090d15" $r="0">几何节点.001</Ctl>
        <Ctl $w={18} $h={17} $bg="#15202d" $r="0"><Icon n="shield" s={13.5} /></Ctl>
        <Ctl $w={17} $h={17} $bg="#090d15" $r="0" $gap={1}><Icon n="copy" s={13.5} /></Ctl>
        <Ctl $w={17} $h={17} $bg="#090d15" $r="0 3px 3px 0" $gap={0.5}><Icon n="close" s={11} /></Ctl>
        <Ctl $w={18} $h={17} $bg="transparent" $gap={5}><Icon n="pin" s={13.5} /></Ctl>
        <Ctl $w={16} $h={17} $bg="#151d27" $push><Icon n="up" s={13} /></Ctl>
        <Ctl $w={15.3} $h={17} $bg="#172130" $gap={6.9} $r="3px 0 0 3px"><Icon n="magnet" s={12.5} /></Ctl>
        <Ctl $w={27.8} $h={17} $r="0 3px 3px 0"><Icon n="gridSnap" s={13} /><Chev /></Ctl>
        <Ctl $w={16.1} $h={17} $bg={blue} $gap={5.9} $r="3px 0 0 3px"><Icon n="overlay" s={14} /></Ctl>
        <Ctl $w={18} $h={17} $r="0 3px 3px 0"><Chev /></Ctl>
        <Ctl $w={16.5} $h={17} $bg="#192231" $gap={15.5}><Icon n="filter" s={13} /></Ctl>
        <Ctl $w={15.7} $h={17} $bg="#0c1118" $gap={6.8}><Icon n="gear" s={13.5} /></Ctl>
      </NodeHeader>
      <Canvas>
        <CanvasSpace>
          <Links full={full} dx={dx} dy={dy} vx={vx} />
          <Crumbs>
            <MenuText $gap={0.5} $c="#8e9398"><Icon n="right" s={8.5} /></MenuText>
            <MenuText $gap={9}><Icon n="object" s={13} /></MenuText>
            <MenuText $gap={8}>棱角球</MenuText>
            <MenuText $gap={12}><Icon n="right" s={10} /></MenuText>
            <MenuText $gap={6.5}><Icon n="nodes" s={13} /></MenuText>
            <MenuText $gap={8}>几何节点</MenuText>
            <MenuText $gap={12}><Icon n="right" s={10} /></MenuText>
            <MenuText $gap={6}><Icon n="tree" s={13} /></MenuText>
            <MenuText $gap={8}>几何节点.001</MenuText>
          </Crumbs>

          <NodeBox $x={83.5 + dx} $y={593 + dy} $h={107}>
            <NodeTitle $bg="#1b222b" $h={31.5}><TitleChevron />组输入</NodeTitle>
            <Port $out $mt={4.3}>几何数据<Socket kind="geo" out /></Port>
            <Port $out><Socket kind="empty" out /></Port>
          </NodeBox>

          {full && (
            <NodeBox $x={400.3 + dx} $y={546.2 + dy} $h={212.3}>
              <NodeTitle $bg="#13665d" $h={30.5}><TitleChevron />设置着色平滑</NodeTitle>
              <Port $out $mt={5.1}>几何数据<Socket kind="geo" out /></Port>
              <Toggle>
                <ToggleItem $on>边</ToggleItem>
                <ToggleItem>面</ToggleItem>
              </Toggle>
              <Port><Socket kind="geo" />几何数据</Port>
              <Port><Socket kind="boolIn" />选中项</Port>
              <Port>
                <Socket kind="boolIn" />
                <Check $on={checked}>
                  {checked && (
                    <svg width="20" height="20" viewBox="0 0 20 20" fill="none">
                      <path d="M4 10.500l4 4L15.500 5" stroke="#fff" strokeWidth="2.2" />
                    </svg>
                  )}
                </Check>
                平滑着色
              </Port>
            </NodeBox>
          )}

          {full && (
            <NodeBox $x={397.7 + dx} $y={781.3 + dy} $h={77} $w={213} $sel>
              <NodeTitle $bg="#69263c" $h={31.8} $sel><TitleChevron />边是否平滑着色</NodeTitle>
              <Port $out $mt={5} $pad={18}>平滑<Socket kind="bool" out /></Port>
            </NodeBox>
          )}

          <NodeBox $x={vx} $y={579.8 + dy} $h={143}>
            <NodeTitle $bg="#4f2539" $h={30.5}><TitleChevron />预览器<Icon n="eye" s={20} /></NodeTitle>
            <Dropdown>自动<Icon n="down" s={15} /></Dropdown>
            <Port><Socket kind="geo" />几何数据</Port>
            <Port><Socket kind={full ? "val" : "valIn"} />值</Port>
          </NodeBox>

          <ScrollX $w={scroll} />
          <ScrollY />
          <Collapse><Icon n="left" s={9} /></Collapse>
        </CanvasSpace>
      </Canvas>
    </>
  );
}

/* ---------- app ---------- */

const shots = [
  { file: "Pasted image 20240914223739.png", w: 1162, gap: 0, pad: 0, mode: "shaded" as Mode, full: false, checked: false, dx: 0, dy: 0, scroll: 587, bg: "#172430",
    note: { x: 486, w: 191, h: 46, lines: ["这是一个棱角球"] } },
  { file: "Pasted image 20240914223917.png", w: 1162, gap: 0, pad: 0.5, mode: "black" as Mode, full: true, checked: false, dx: 0, dy: 0.5, scroll: 587, bg: "#1b2a36",
    note: { x: 382, w: 398, h: 64, lines: ["通过预览器可以看到，边未平滑着色，所以节点输出假（0），反", "应到网格上都是黑色（0），"] } },
  { file: "Pasted image 20240914224022.png", w: 1165, gap: 1, pad: 1.5, mode: "white" as Mode, full: true, checked: true, dx: 86.4, dy: -3.4, scroll: 542, bg: "#1b2a36",
    note: { x: 401, w: 363, h: 75, lines: ["当边平滑着色后，节点输出真（1）,反映到网格上就是白", "色"] } },
];

export default function App() {
  return (
    <Page>
      <GlobalStyle />
      <TitleBar>
        {shots.map((s) => (
          <Slot key={s.file} $w={s.w} $gap={s.gap}>
            <FileLabel>{s.file}</FileLabel>
          </Slot>
        ))}
      </TitleBar>
      <Row>
        {shots.map((s) => (
          <Slot key={s.file} $w={s.w} $gap={s.gap}>
            <Panel>
              <Shot $pad={s.pad}>
                <ViewportArea mode={s.mode} />
                <NodeArea full={s.full} checked={s.checked} dx={s.dx} dy={s.dy} scroll={s.scroll} bg={s.bg} />
              </Shot>
            </Panel>
          </Slot>
        ))}
      </Row>
      <Row>
        {shots.map((s) => (
          <Slot key={s.file} $w={s.w} $gap={s.gap}>
            <Note $x={s.note.x} $w={s.note.w} $h={s.note.h}>
              {s.note.lines.map((l) => (
                <div key={l}>{l}</div>
              ))}
            </Note>
          </Slot>
        ))}
      </Row>
    </Page>
  );
}
